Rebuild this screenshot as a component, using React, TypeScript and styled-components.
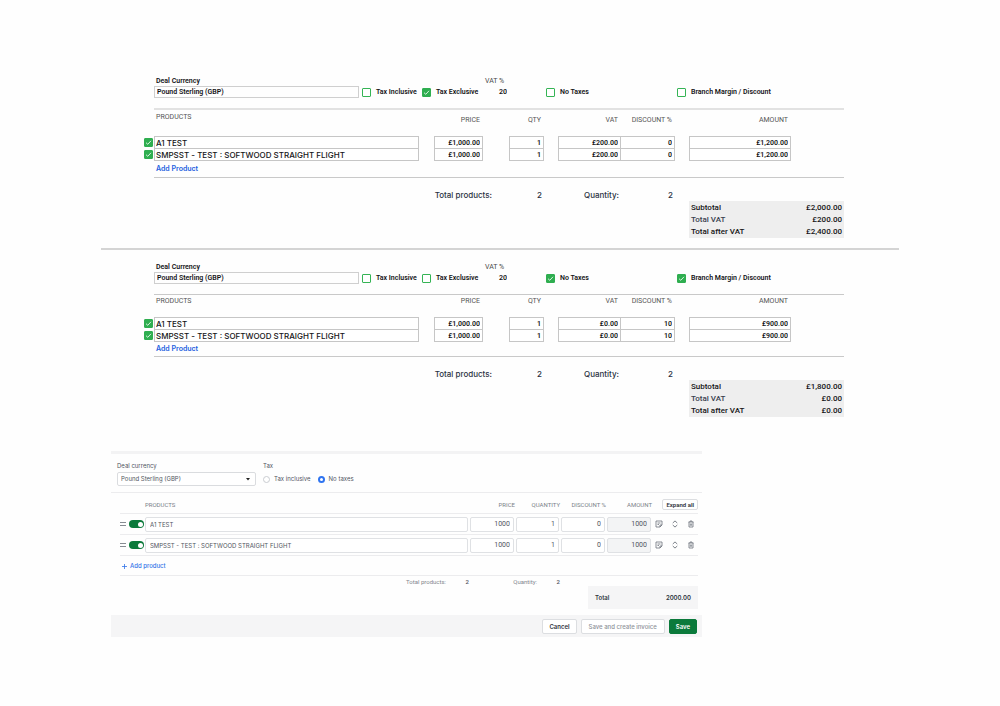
import React from "react";
import styled, { createGlobalStyle, css } from "styled-components";

const GlobalStyle = createGlobalStyle`
  *, *::before, *::after { box-sizing: border-box; }
  body {
    margin: 0;
    background: #fefefe;
    color: #141416;
    font-family: Inter, "Liberation Sans", sans-serif;
    font-size: 7px;
    line-height: 10px;
  }
  input, select, button { font: inherit; color: inherit; margin: 0; }
  table { border-collapse: separate; border-spacing: 0; table-layout: fixed; width: 100%; }
  th, td { padding: 0; font-weight: inherit; }
`;

const wide = `Inter, "Liberation Sans", sans-serif`;
const narrow = `Roboto, "Liberation Sans", sans-serif`;

/* ---------- Quote sheets ---------- */

const Page = styled.main`
  padding: 76px 0 64px;
`;

const Sheet = styled.section`
  padding: 0 156px 0 144px;
  font-family: ${narrow};
`;

const Divider = styled.hr`
  height: 2px;
  margin: 10px 101px 12px;
  border: 0;
  background: #d4d4d4;
`;

const Options = styled.div`
  display: grid;
  grid-template-columns: 1fr 60px 63px 61px 131px 167px;
  align-items: end;
  margin-left: 10px;
  padding-bottom: 10px;
  font-weight: 600;
`;

const CurrencyField = styled.label`
  display: flex;
  flex-direction: column;
  margin-right: 3px;

  span { padding-left: 2px; }
  input {
    width: 100%;
    height: 12px;
    padding: 0 2px;
    border: 1px solid #cfcfcf;
    background: none;
  }
`;

const VatField = styled.label`
  display: flex;
  flex-direction: column;
  width: 22px;
  white-space: nowrap;

  span { font-weight: 400; color: #4a4a4a; }
  input {
    width: 100%;
    height: 12px;
    padding: 0;
    border: 0;
    background: none;
    text-align: right;
  }
`;

const TickLabel = styled.label`
  display: flex;
  align-items: center;
  gap: 5px;
  height: 12px;
  white-space: nowrap;
`;

const TickBox = styled.span`
  display: inline-grid;
  width: 9px;
  height: 9px;

  input, svg { grid-area: 1 / 1; width: 9px; height: 9px; }
  input {
    appearance: none;
    border: 1px solid #35b455;
    border-radius: 1px;
    background: #fff;
  }
  input:checked { background: #2fae50; border-color: #2fae50; }
  svg { pointer-events: none; visibility: hidden; }
  input:checked + svg { visibility: visible; }
`;

function Tick({ checked, name }: { checked: boolean; name?: string }) {
  return (
    <TickBox>
      <input type="checkbox" defaultChecked={checked} aria-label={name} />
      <svg viewBox="0 0 9 9" fill="none" stroke="#e9f8ec" strokeWidth="0.9">
        <path d="M2 4.7 3.8 6.3 7 2.8" />
      </svg>
    </TickBox>
  );
}

const SheetBody = styled.div<{ $roomy?: boolean }>`
  ${TickBox} { display: grid; }
  thead th {
    height: ${(p) => (p.$roomy ? 26 : 22)}px;
    padding-top: ${(p) => (p.$roomy ? 5 : 1)}px;
    vertical-align: top;
    color: #555;
  }
  thead th:nth-child(2) { padding-top: ${(p) => (p.$roomy ? 2 : 1)}px; }
`;

const Rule = styled.div<{ $heavy?: boolean }>`
  height: ${(p) => (p.$heavy ? 2 : 1)}px;
  margin-left: 10px;
  background: ${(p) => (p.$heavy ? "#e2e2e2" : "#c9c9c9")};
`;

const Head = styled.th<{ $gap?: number; $left?: boolean }>`
  padding-right: ${(p) => (p.$gap ?? 0) + 3}px;
  padding-left: ${(p) => (p.$left ? 2 : 0)}px;
  text-align: ${(p) => (p.$left ? "left" : "right")};
  white-space: nowrap;
`;

const Cell = styled.td<{ $gap?: number; $joined?: boolean; $left?: boolean }>`
  padding-right: ${(p) => p.$gap ?? 0}px;
  vertical-align: top;

  input[type="text"] {
    display: block;
    width: 100%;
    height: 12px;
    padding: 1px 2px 0;
    border: 1px solid #c6c6c6;
    border-bottom: 0;
    background: #fff;
    border-radius: 0;
    font-weight: 600;
    text-align: right;
    ${(p) => p.$joined && css`border-left: 0;`}
    ${(p) => p.$left && css`
      padding: 0 1px;
      font-family: ${wide};
      font-size: 8px;
      font-weight: 500;
      text-align: left;
    `}
  }
  tr:last-child > & input[type="text"] { height: 13px; border-bottom: 1px solid #c6c6c6; }
  ${TickBox} { margin-top: 2px; }
`;

const AddLink = styled.a<{ $roomy?: boolean }>`
  display: block;
  width: max-content;
  padding-left: 12px;
  line-height: ${(p) => (p.$roomy ? 16 : 14)}px;
  color: #1c5fe0;
  font-family: ${wide};
  font-weight: 600;
  text-decoration: none;
`;

const Summary = styled.div`
  display: grid;
  grid-template-columns: 1fr 50px 77px 54px 171px;
  font-size: 8px;
  font-weight: 500;
  color: #2a3242;
  text-align: right;

  > span { padding-top: 12px; font-family: ${wide}; }
`;

const Totals = styled.dl`
  display: grid;
  grid-template-columns: 1fr auto;
  margin: 23px 0 0 16px;
  padding: 1px 2px 0;
  background: #eeeeee;
  color: #141416;
  line-height: 12px;
  text-align: left;

  dt, dd { margin: 0; }
  dd { text-align: right; }
`;

const Muted = styled.dt`
  color: #38414f;
`;

type Quote = {
  taxExclusive: boolean;
  noTaxes: boolean;
  margin: boolean;
  vat: string;
  discount: string;
  amount: string;
  totals: [string, string, string];
  roomy?: boolean;
};

const products = ["A1 TEST", "SMPSST - TEST : SOFTWOOD STRAIGHT FLIGHT"];

function QuoteSheet({ quote: q }: { quote: Quote }) {
  return (
    <Sheet>
      <Options>
        <CurrencyField>
          <span>Deal Currency</span>
          <input type="text" defaultValue="Pound Sterling (GBP)" />
        </CurrencyField>
        <TickLabel><Tick checked={false} />Tax Inclusive</TickLabel>
        <TickLabel><Tick checked={q.taxExclusive} />Tax Exclusive</TickLabel>
        <VatField>
          <span>VAT %</span>
          <input type="text" defaultValue="20" />
        </VatField>
        <TickLabel><Tick checked={q.noTaxes} />No Taxes</TickLabel>
        <TickLabel><Tick checked={q.margin} />Branch Margin / Discount</TickLabel>
      </Options>
      <Rule $heavy={q.roomy} />
      <SheetBody $roomy={q.roomy}>
        <table>
          <colgroup>
            <col width="10" /><col /><col width="75" /><col width="49" />
            <col width="63" /><col width="68" /><col width="155" />
          </colgroup>
          <thead>
            <tr>
              <th />
              <Head $left>PRODUCTS</Head>
              <Head $gap={26}>PRICE</Head>
              <Head $gap={14}>QTY</Head>
              <Head>VAT</Head>
              <Head $gap={14}>DISCOUNT %</Head>
              <Head $gap={53}>AMOUNT</Head>
            </tr>
          </thead>
          <tbody>
            {products.map((name) => (
              <tr key={name}>
                <Cell><Tick checked name={`Include ${name}`} /></Cell>
                <Cell $gap={15} $left><input type="text" aria-label="Product" defaultValue={name} /></Cell>
                <Cell $gap={26}><input type="text" aria-label="Price" defaultValue="£1,000.00" /></Cell>
                <Cell $gap={14}><input type="text" aria-label="Quantity" defaultValue="1" /></Cell>
                <Cell><input type="text" aria-label="VAT" defaultValue={q.vat} /></Cell>
                <Cell $gap={14} $joined><input type="text" aria-label="Discount" defaultValue={q.discount} /></Cell>
                <Cell $gap={53}><input type="text" aria-label="Amount" defaultValue={q.amount} /></Cell>
              </tr>
            ))}
          </tbody>
        </table>
        <AddLink href="#add" $roomy={q.roomy}>Add Product</AddLink>
      </SheetBody>
      <Rule />
      <Summary>
        <span>Total products:</span>
        <span>2</span>
        <span>Quantity:</span>
        <span>2</span>
        <Totals>
          <dt>Subtotal</dt><dd>{q.totals[0]}</dd>
          <Muted>Total VAT</Muted><dd>{q.totals[1]}</dd>
          <dt>Total after VAT</dt><dd>{q.totals[2]}</dd>
        </Totals>
      </Summary>
    </Sheet>
  );
}

/* ---------- Product editor ---------- */

const Editor = styled.section`
  margin: 34px 298px 0 111px;
  border-top: 3px solid #f3f3f4;
  font-size: 6px;
  color: #50555e;
`;

const EditorTop = styled.div`
  display: flex;
  gap: 7px;
  padding: 7px 6px 6px;
  border-bottom: 1px solid #ececee;
`;

const SelectField = styled.label`
  display: flex;
  flex-direction: column;
  gap: 1px;
  width: 139px;
`;

const SelectBox = styled.span`
  display: grid;
  align-items: center;

  select, svg { grid-area: 1 / 1; }
  select {
    appearance: none;
    height: 14px;
    padding: 0 3px;
    border: 1px solid #dadcdf;
    border-radius: 2px;
    background: #fff;
  }
  svg { justify-self: end; margin-right: 6px; width: 4px; height: 3px; pointer-events: none; }
`;

const TaxGroup = styled.fieldset`
  margin: 0;
  padding: 0;
  border: 0;

  legend { padding: 0; margin-bottom: 1px; }
`;

const Radios = styled.div`
  display: flex;
  gap: 7px;
`;

const RadioLabel = styled.label`
  display: flex;
  align-items: center;
  gap: 4px;
  height: 14px;

  input {
    appearance: none;
    width: 7px;
    height: 7px;
    border: 1px solid #c9ccd1;
    border-radius: 50%;
    background: #fff;
  }
  input:checked { border: 2px solid #2f74f0; }
`;

const Lines = styled.div`
  padding: 0 4px 0 9px;

  th {
    height: 21px;
    padding-top: 3px;
    border-bottom: 1px solid #ececee;
    color: #7a7f88;
    font-family: ${narrow};
    text-align: right;
    white-space: nowrap;
  }
  th:nth-child(3) { text-align: left; }
  td {
    height: 21px;
    border-bottom: 1px solid #ececee;
  }
  th:nth-child(n + 4):nth-child(-n + 7) { padding-right: 1px; }
`;

const LineInput = styled.input<{ $end?: boolean }>`
  display: block;
  width: calc(100% - 2px);
  height: 15px;
  padding: 0 ${(p) => (p.$end ? 3 : 4)}px;
  border: 1px solid #dfe1e4;
  border-radius: 2px;
  background: #fff;
  ${(p) => p.$end && css`
    font-family: ${narrow};
    font-size: 7px;
    text-align: right;
  `}

  &:read-only { background: #f3f4f5; }
`;

const Handle = styled.svg`
  display: block;
  width: 6px;
  height: 4px;
`;

const Switch = styled.input`
  appearance: none;
  display: flex;
  align-items: center;
  justify-content: flex-end;
  width: 15px;
  height: 8px;
  padding: 1px;
  border-radius: 4px;
  background: #0b7a3b;

  &::before {
    content: "";
    width: 5px;
    height: 5px;
    border-radius: 50%;
    background: #fff;
  }
`;

const Actions = styled.div`
  display: flex;
  justify-content: space-between;
  padding: 0 3px 0 2px;
`;

const IconButton = styled.button`
  display: flex;
  padding: 0;
  border: 0;
  background: none;
  color: #6c727b;

  svg { width: 8px; height: 8px; fill: none; stroke: currentColor; }
`;

const Button = styled.button<{ $tone?: "primary" | "muted"; $small?: boolean }>`
  height: ${(p) => (p.$small ? 11 : 15)}px;
  padding: 0 ${(p) => (p.$small ? 3 : p.$tone === "muted" ? 7 : 6)}px;
  border: 1px solid ${(p) => (p.$tone === "primary" ? "#0b7a3b" : "#dcdee1")};
  border-radius: 2px;
  background: ${(p) => (p.$tone === "primary" ? "#0b7a3b" : "#fff")};
  color: ${(p) => (p.$tone === "primary" ? "#fff" : p.$tone === "muted" ? "#8d9198" : "#2e333b")};
  font-weight: ${(p) => (p.$tone === "muted" ? 500 : 600)};
  line-height: 9px;
  white-space: nowrap;
`;

const AddLine = styled.div`
  height: 20px;
  padding-left: 2px;
  border-bottom: 1px solid #ececee;
  line-height: 20px;

  a {
    display: inline-flex;
    align-items: center;
    gap: 3px;
    color: #3273e8;
    font-weight: 500;
    text-decoration: none;
  }
  svg { width: 5px; height: 5px; }
`;

const LineSummary = styled.div`
  display: grid;
  grid-template-columns: 1fr 23px 68px 23px 138px;
  text-align: right;
  color: #82868e;

  > span { padding-top: 1px; font-family: ${narrow}; }
  b { font-weight: 500; color: #50555e; }
`;

const GrandTotal = styled.div`
  display: flex;
  justify-content: space-between;
  margin: 10px 0 0 28px;
  padding: 0 7px;
  background: #f5f5f6;
  color: #2e3640;
  font-weight: 600;
  line-height: 23px;
`;

const Footer = styled.footer`
  display: flex;
  justify-content: flex-end;
  align-items: center;
  gap: 4px;
  height: 22px;
  margin-top: 6px;
  padding-right: 5px;
  background: #f5f5f6;
`;

function LineActions() {
  return (
    <Actions>
      <IconButton type="button" aria-label="Note">
        <svg viewBox="0 0 16 16" strokeWidth="1.6">
          <path d="M2 2h12v8l-4 4H2zM14 10h-4v4M5 6h6M5 9h3" />
        </svg>
      </IconButton>
      <IconButton type="button" aria-label="Expand">
        <svg viewBox="0 0 16 16" strokeWidth="1.8">
          <path d="M3.500 6 8 1.800 12.500 6M3.500 10 8 14.200 12.500 10" />
        </svg>
      </IconButton>
      <IconButton type="button" aria-label="Delete">
        <svg viewBox="0 0 16 16" strokeWidth="1.6">
          <path d="M3 4h10M6 4V2h4v2M4 4v10h8V4M6.700 7v4.500M9.300 7v4.500" />
        </svg>
      </IconButton>
    </Actions>
  );
}

function ProductEditor() {
  return (
    <Editor>
      <EditorTop>
        <SelectField>
          Deal currency
          <SelectBox>
            <select defaultValue="gbp">
              <option value="gbp">Pound Sterling (GBP)</option>
            </select>
            <svg viewBox="0 0 4 3"><path d="M0 0h4L2 2.600z" fill="#222" /></svg>
          </SelectBox>
        </SelectField>
        <TaxGroup>
          <legend>Tax</legend>
          <Radios>
            <RadioLabel><input type="radio" name="tax" />Tax inclusive</RadioLabel>
            <RadioLabel><input type="radio" name="tax" defaultChecked />No taxes</RadioLabel>
          </Radios>
        </TaxGroup>
      </EditorTop>
      <Lines>
        <table>
          <colgroup>
            <col width="9" /><col width="16" /><col /><col width="46" /><col width="45" />
            <col width="46" /><col width="46" /><col width="45" />
          </colgroup>
          <thead>
            <tr>
              <th /><th />
              <th>PRODUCTS</th><th>PRICE</th><th>QUANTITY</th>
              <th>DISCOUNT %</th><th>AMOUNT</th>
              <th><Button type="button" $small>Expand all</Button></th>
            </tr>
          </thead>
          <tbody>
            {products.map((name) => (
              <tr key={name}>
                <td><Handle viewBox="0 0 6 4"><path d="M0 .5h6M0 3.500h6" stroke="#868b92" /></Handle></td>
                <td><Switch type="checkbox" defaultChecked aria-label={`Include ${name}`} /></td>
                <td><LineInput aria-label="Product" defaultValue={name} /></td>
                <td><LineInput $end aria-label="Price" defaultValue="1000" /></td>
                <td><LineInput $end aria-label="Quantity" defaultValue="1" /></td>
                <td><LineInput $end aria-label="Discount" defaultValue="0" /></td>
                <td><LineInput $end readOnly aria-label="Amount" value="1000" /></td>
                <td><LineActions /></td>
              </tr>
            ))}
          </tbody>
        </table>
        <AddLine>
          <a href="#add-line">
            <svg viewBox="0 0 5 5"><path d="M2.500 0v5M0 2.500h5" stroke="currentColor" strokeWidth=".8" /></svg>
            Add product
          </a>
        </AddLine>
        <LineSummary>
          <span>Total products:</span>
          <span><b>2</b></span>
          <span>Quantity:</span>
          <span><b>2</b></span>
          <GrandTotal><span>Total</span><span>2000.00</span></GrandTotal>
        </LineSummary>
      </Lines>
      <Footer>
        <Button type="button">Cancel</Button>
        <Button type="button" $tone="muted">Save and create invoice</Button>
        <Button type="button" $tone="primary">Save</Button>
      </Footer>
    </Editor>
  );
}

const withTax: Quote = {
  taxExclusive: true,
  noTaxes: false,
  margin: false,
  vat: "£200.00",
  discount: "0",
  amount: "£1,200.00",
  totals: ["£2,000.00", "£200.00", "£2,400.00"],
  roomy: true,
};

const withDiscount: Quote = {
  taxExclusive: false,
  noTaxes: true,
  margin: true,
  vat: "£0.00",
  discount: "10",
  amount: "£900.00",
  totals: ["£1,800.00", "£0.00", "£0.00"],
};

export default function App() {
  return (
    <>
      <GlobalStyle />
      <Page>
        <QuoteSheet quote={withTax} />
        <Divider />
        <QuoteSheet quote={withDiscount} />
        <ProductEditor />
      </Page>
    </>
  );
}
